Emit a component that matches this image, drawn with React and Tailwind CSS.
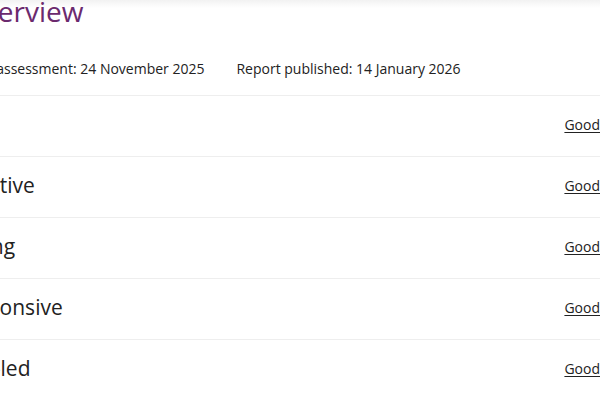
export default function App() {
  const rows = ["Safe", "Effective", "Caring", "Responsive", "Well-led"];
  return (
    <div className="relative w-[600px] h-[400px] overflow-hidden bg-white text-[#222] font-['Open_Sans',sans-serif]">
      <div className="pointer-events-none absolute inset-x-0 top-0 h-[8px] bg-gradient-to-b from-[#f2f2f2] to-white" />
      <div className="relative -ml-[48px] w-[700px]">
        <h1 className="-mt-[9px] ml-[10px] text-[28px] leading-[40px] font-normal text-[#6b2a6e]">Overview</h1>
        <div className="mt-[28px] flex gap-[32px] text-[14px] leading-[20px]">
          <span className="-ml-[7px]">Date of assessment: 24 November 2025</span>
          <span>Report published: 14 January 2026</span>
        </div>
        <div className="mt-[16px] border-t border-[#eeeeee]">
          {rows.map((r) => (
            <div key={r} className="flex h-[61px] items-center justify-between border-b border-[#eeeeee] pb-[4px] pr-[52px]">
              <span className="text-[21px] leading-[30px]">{r}</span>
              <a href="#" className="text-[14px] underline underline-offset-2 text-[#222]">Good</a>
            </div>
          ))}
        </div>
      </div>
    </div>
  );
}
